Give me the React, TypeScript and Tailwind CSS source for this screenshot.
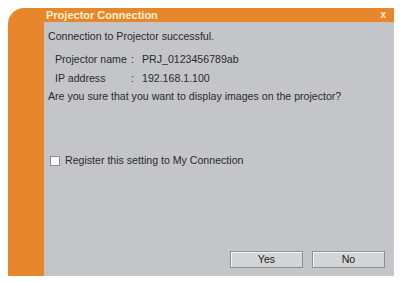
import React from 'react';

const App: React.FC = () => {
  return (
    <div className="w-[401px] h-[282px] bg-white pt-[8px] pl-[8px] overflow-hidden font-['Liberation_Sans',sans-serif]">
      <div className="w-[386px] h-[268px] bg-[#e8862c] rounded-tl-[16px] flex flex-col">
        {/* Title bar */}
        <div className="h-[14px] flex items-center pl-[38px] pr-[8px]">
          <span className="text-[11px] font-bold text-[#fff2d0] leading-none">Projector Connection</span>
          <span className="ml-auto text-[10px] font-bold text-[#fff2d0] leading-none">x</span>
        </div>

        {/* Body */}
        <div className="flex-1 ml-[36px] bg-[#c3c5c8] flex flex-col text-[10.6px] text-[#2a2a2a] leading-none pl-[4px] pt-[9px]">
          <p>Connection to Projector successful.</p>
          <div className="mt-[12px] pl-[7px] flex whitespace-nowrap">
            <span className="w-[76px]">Projector name</span>
            <span className="w-[11px]">:</span>
            <span>PRJ_0123456789ab</span>
          </div>
          <div className="mt-[9px] pl-[7px] flex whitespace-nowrap">
            <span className="w-[76px]">IP address</span>
            <span className="w-[11px]">:</span>
            <span>192.168.1.100</span>
          </div>
          <p className="mt-[7px] whitespace-nowrap">Are you sure that you want to display images on the projector?</p>

          <label className="mt-[54px] ml-[2px] flex items-center gap-[5px]">
            <span className="w-[10px] h-[10px] bg-white border border-[#8a8a8a]" />
            <span>Register this setting to My Connection</span>
          </label>

          <div className="mt-auto mb-[8px] flex justify-end gap-[9px] pr-[9px]">
            <button className="w-[73px] h-[17px] bg-[#d4d5d7] border border-[#8e8f92] shadow-[inset_1px_1px_0_#f4f4f4] text-[10.6px] leading-none text-[#222]">Yes</button>
            <button className="w-[73px] h-[17px] bg-[#d4d5d7] border border-[#8e8f92] shadow-[inset_1px_1px_0_#f4f4f4] text-[10.6px] leading-none text-[#222]">No</button>
          </div>
        </div>
      </div>
    </div>
  );
};

export default App;
